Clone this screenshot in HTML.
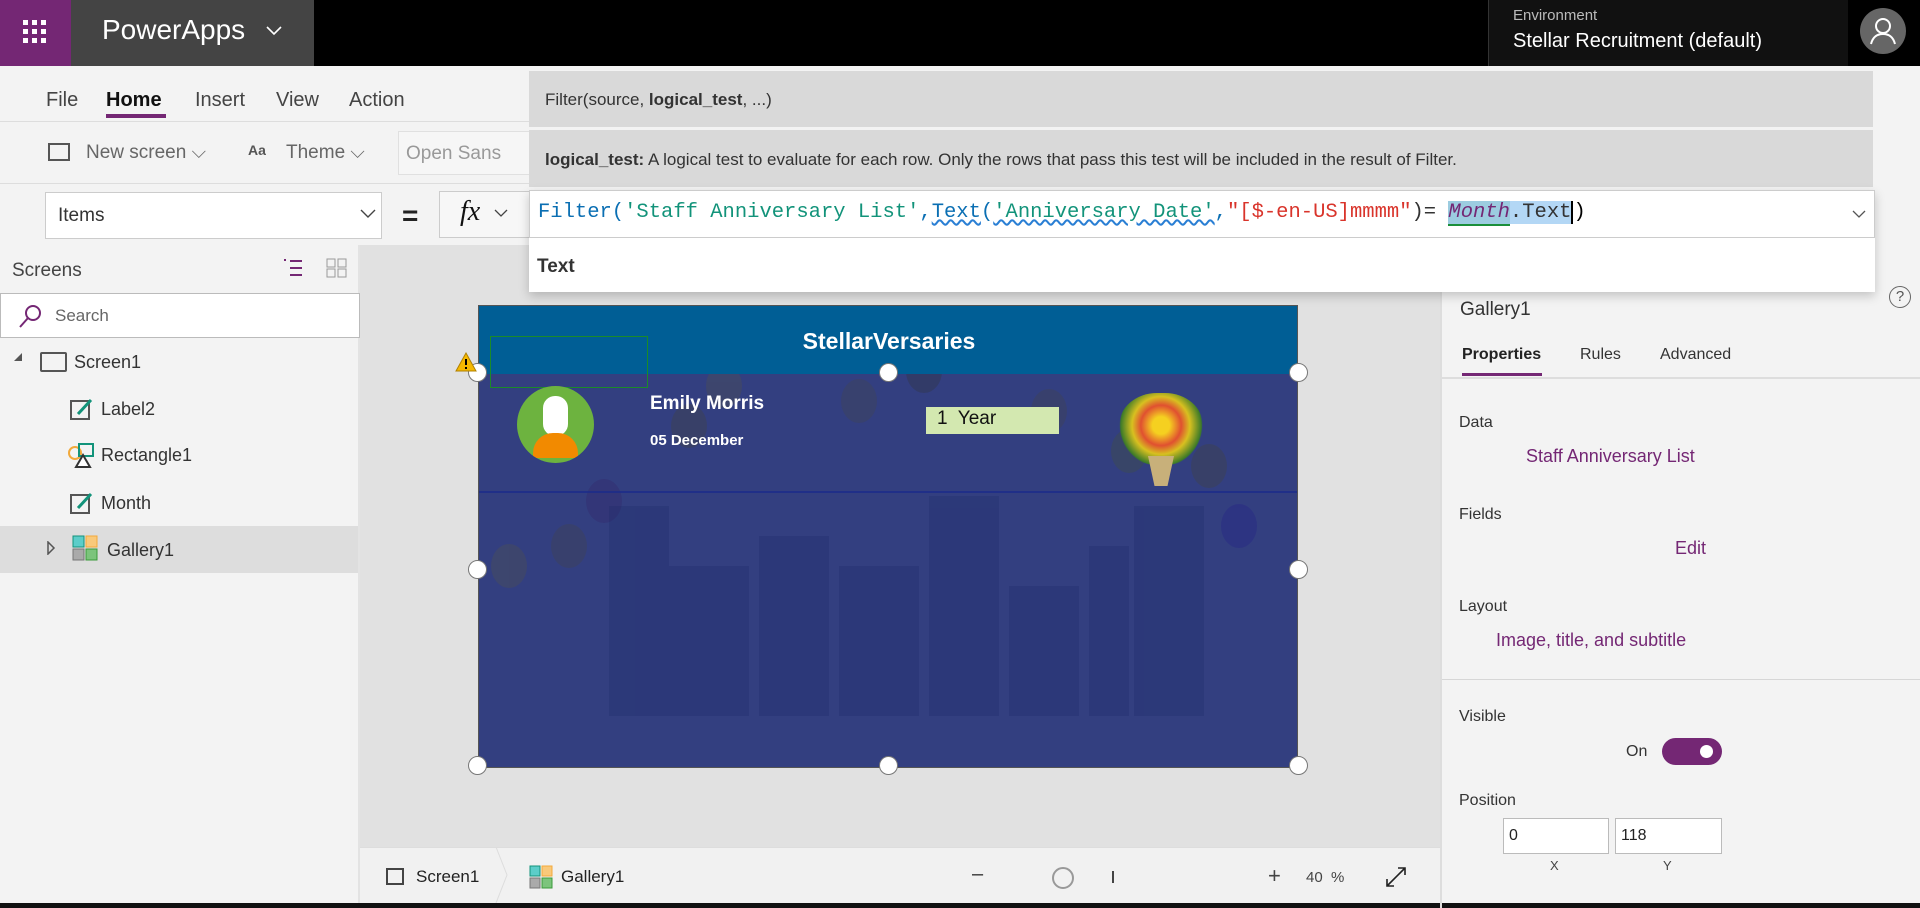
<!DOCTYPE html>
<html><head><meta charset="utf-8"><style>
*{box-sizing:border-box;margin:0;padding:0}
body{width:1920px;height:908px;overflow:hidden;background:#f3f3f3;font-family:"Liberation Sans",sans-serif;position:relative;color:#333}
.a{position:absolute;white-space:nowrap}
.mono{font-family:"Liberation Mono",monospace}
.z{z-index:10}
</style></head><body>
<div class="a" style="left:0;top:0;width:1920px;height:66px;background:#000"></div>
<div class="a" style="left:0;top:0;width:71px;height:66px;background:#742774"></div>
<svg class="a" style="left:23px;top:20px" width="24" height="24"><g fill="#fff"><rect x="0" y="0" width="5" height="5"/><rect x="9" y="0" width="5" height="5"/><rect x="18" y="0" width="5" height="5"/><rect x="0" y="9" width="5" height="5"/><rect x="9" y="9" width="5" height="5"/><rect x="18" y="9" width="5" height="5"/><rect x="0" y="18" width="5" height="5"/><rect x="9" y="18" width="5" height="5"/><rect x="18" y="18" width="5" height="5"/></g></svg>
<div class="a" style="left:71px;top:0;width:243px;height:66px;background:#444"></div>
<div class="a" style="left:102px;top:14px;font-size:28px;color:#fff">PowerApps</div>
<svg class="a" style="left:266px;top:26px" width="16" height="10"><path d="M1 1L8 8L15 1" stroke="#fff" stroke-width="1.6" fill="none"/></svg>
<div class="a" style="left:1488px;top:0;width:360px;height:66px;background:#111;border-left:1px solid #333"></div>
<div class="a" style="left:1513px;top:7px;font-size:15px;color:#bbb">Environment</div>
<div class="a" style="left:1513px;top:30px;font-size:20px;color:#fff">Stellar Recruitment (default)</div>
<div class="a" style="left:1860px;top:8px;width:46px;height:46px;border-radius:50%;background:#666"></div>
<svg class="a" style="left:1860px;top:8px" width="46" height="46"><circle cx="23" cy="18" r="7" stroke="#fff" stroke-width="2" fill="none"/><path d="M11 36c2-8 7-10 12-10s10 2 12 10" stroke="#fff" stroke-width="2" fill="none"/></svg>

<div class="a" style="left:0;top:121px;width:530px;height:1px;background:#ddd"></div>
<div class="a" style="left:46px;top:89px;font-size:20px;color:#444">File</div>
<div class="a" style="left:106px;top:89px;font-size:20px;color:#111;font-weight:bold">Home</div>
<div class="a" style="left:106px;top:114px;width:60px;height:4px;background:#742774"></div>
<div class="a" style="left:195px;top:89px;font-size:20px;color:#444">Insert</div>
<div class="a" style="left:276px;top:89px;font-size:20px;color:#444">View</div>
<div class="a" style="left:349px;top:89px;font-size:20px;color:#444">Action</div>
<div class="a" style="left:0;top:183px;width:530px;height:1px;background:#ddd"></div>
<div class="a" style="left:48px;top:143px;width:22px;height:18px;border:2px solid #555"></div>
<div class="a" style="left:86px;top:142px;font-size:19px;color:#666">New screen ⌵</div>
<div class="a" style="left:248px;top:142px;font-size:14px;color:#555;font-weight:bold">Aa</div>
<div class="a" style="left:286px;top:142px;font-size:19px;color:#666">Theme ⌵</div>
<div class="a" style="left:398px;top:131px;width:140px;height:44px;border:1px solid #e0e0e0;background:#f6f6f6"></div>
<div class="a" style="left:406px;top:143px;font-size:19px;color:#999">Open Sans</div>
<div class="a" style="left:45px;top:192px;width:337px;height:47px;background:#fff;border:1px solid #ccc"></div>
<div class="a" style="left:58px;top:205px;font-size:19px;color:#333">Items</div>
<svg class="a" style="left:360px;top:209px" width="16" height="10"><path d="M1 1L8 8L15 1" stroke="#444" stroke-width="1.4" fill="none"/></svg>
<div class="a" style="left:402px;top:200px;font-size:28px;color:#222;font-weight:bold">=</div>
<div class="a" style="left:439px;top:191px;width:95px;height:47px;background:#f7f7f7;border:1px solid #ccc"></div>
<div class="a" style="left:460px;top:196px;font-size:28px;color:#111;font-family:'Liberation Serif',serif;font-style:italic">fx</div>
<svg class="a" style="left:494px;top:209px" width="14" height="9"><path d="M1 1L7 7L13 1" stroke="#444" stroke-width="1.3" fill="none"/></svg>

<div class="a" style="left:358px;top:245px;width:2px;height:663px;background:#e3e3e3"></div>
<div class="a" style="left:12px;top:260px;font-size:19px;color:#444">Screens</div>
<svg class="a" style="left:280px;top:258px" width="26" height="20"><path d="M4 2h2M10 3h12M10 10h12M10 17h12" stroke="#742774" stroke-width="2"/></svg>
<svg class="a" style="left:326px;top:258px" width="22" height="20"><g stroke="#999" fill="none"><rect x="1" y="1" width="8" height="8"/><rect x="12" y="1" width="8" height="8"/><rect x="1" y="11" width="8" height="8"/><rect x="12" y="11" width="8" height="8"/></g></svg>
<div class="a" style="left:0;top:293px;width:360px;height:45px;background:#fff;border:1px solid #bbb"></div>
<svg class="a" style="left:18px;top:303px" width="26" height="26"><circle cx="15" cy="10" r="7" stroke="#742774" stroke-width="2" fill="none"/><path d="M10 15L2 24" stroke="#742774" stroke-width="2"/></svg>
<div class="a" style="left:55px;top:306px;font-size:17px;color:#666">Search</div>
<svg class="a" style="left:13px;top:352px" width="10" height="10"><path d="M9 1V9H1Z" fill="#555"/></svg>
<div class="a" style="left:40px;top:352px;width:27px;height:20px;border:2px solid #555;border-radius:2px"></div>
<div class="a" style="left:74px;top:352px;font-size:18px;color:#333">Screen1</div>
<svg class="a" style="left:69px;top:397px" width="26" height="24"><rect x="2" y="4" width="18" height="18" stroke="#555" stroke-width="2" fill="none"/><path d="M9 17L22 3" stroke="#12937a" stroke-width="3"/></svg>
<div class="a" style="left:101px;top:399px;font-size:18px;color:#333">Label2</div>
<svg class="a" style="left:66px;top:443px" width="30" height="26"><circle cx="9" cy="10" r="6" stroke="#f2a93b" stroke-width="2" fill="none"/><rect x="13" y="1" width="14" height="12" stroke="#12937a" stroke-width="2" fill="none"/><path d="M10 24L17 12L24 24Z" stroke="#333" stroke-width="2" fill="#fff"/></svg>
<div class="a" style="left:101px;top:445px;font-size:18px;color:#333">Rectangle1</div>
<svg class="a" style="left:69px;top:491px" width="26" height="24"><rect x="2" y="4" width="18" height="18" stroke="#555" stroke-width="2" fill="none"/><path d="M9 17L22 3" stroke="#12937a" stroke-width="3"/></svg>
<div class="a" style="left:101px;top:493px;font-size:18px;color:#333">Month</div>
<div class="a" style="left:0;top:526px;width:358px;height:47px;background:#ddd"></div>
<svg class="a" style="left:46px;top:541px" width="10" height="14"><path d="M2 1L8 7L2 13Z" fill="none" stroke="#555" stroke-width="1.5"/></svg>
<svg class="a" style="left:72px;top:535px" width="26" height="26"><rect x="1" y="1" width="11" height="11" fill="#5ccdc9" stroke="#12937a"/><rect x="14" y="1" width="11" height="11" fill="#f9c97a" stroke="#f2a93b"/><rect x="1" y="14" width="11" height="11" fill="#aaa" stroke="#777"/><rect x="14" y="14" width="11" height="11" fill="#7cc47c" stroke="#3a9a3a"/></svg>
<div class="a" style="left:107px;top:540px;font-size:18px;color:#333">Gallery1</div>

<div class="a" style="left:360px;top:245px;width:1080px;height:602px;background:#e1e1e1"></div>
<div class="a" style="left:478px;top:305px;width:820px;height:463px;background:#333f80;overflow:hidden;border:1px solid #555">
  <svg width="820" height="463" style="position:absolute;left:0;top:0">
    <g opacity=".3">
      <ellipse cx="70" cy="130" rx="18" ry="22" fill="#554"/><ellipse cx="125" cy="195" rx="18" ry="22" fill="#332266"/><ellipse cx="90" cy="240" rx="18" ry="22" fill="#444"/>
      <ellipse cx="210" cy="120" rx="18" ry="22" fill="#443"/><ellipse cx="245" cy="80" rx="18" ry="22" fill="#554"/><ellipse cx="380" cy="95" rx="18" ry="22" fill="#444"/>
      <ellipse cx="445" cy="65" rx="18" ry="22" fill="#333"/><ellipse cx="570" cy="105" rx="18" ry="22" fill="#444"/><ellipse cx="650" cy="145" rx="18" ry="22" fill="#453"/>
      <ellipse cx="760" cy="220" rx="18" ry="22" fill="#221a88"/><ellipse cx="730" cy="160" rx="18" ry="22" fill="#443"/><ellipse cx="30" cy="260" rx="18" ry="22" fill="#554"/>
    </g>
    <g fill="#1e2a6a" opacity=".3">
      <rect x="130" y="200" width="60" height="210"/><rect x="190" y="260" width="80" height="150"/><rect x="280" y="230" width="70" height="180"/>
      <rect x="360" y="260" width="80" height="150"/><rect x="450" y="190" width="70" height="220"/><rect x="530" y="280" width="70" height="130"/>
      <rect x="610" y="240" width="40" height="170"/><rect x="655" y="200" width="70" height="210"/>
    </g>
    <line x1="0" y1="186" x2="820" y2="186" stroke="#1a2a8a" stroke-width="1.5"/>
  </svg>
  <div class="a" style="left:0;top:0;width:820px;height:68px;background:#005e95"></div>
  <div class="a" style="left:0;top:22px;width:820px;text-align:center;font-size:23px;color:#fff;font-weight:bold">StellarVersaries</div>
  <div class="a" style="left:11px;top:30px;width:158px;height:52px;border:1px solid #1b8a2a"></div>
  <div class="a" style="left:38px;top:80px;width:77px;height:77px;border-radius:50%;background:#6db33f;overflow:hidden">
    <div class="a" style="left:26px;top:10px;width:25px;height:40px;border-radius:12px;background:#fff"></div>
    <div class="a" style="left:16px;top:47px;width:45px;height:25px;border-radius:20px 20px 0 0;background:#f28a00"></div>
  </div>
  <div class="a" style="left:171px;top:87px;font-size:19px;color:#fff;font-weight:bold">Emily Morris</div>
  <div class="a" style="left:171px;top:126px;font-size:15px;color:#fff;font-weight:bold">05 December</div>
  <div class="a" style="left:447px;top:101px;width:133px;height:27px;background:#d3e8b0"></div>
  <div class="a" style="left:458px;top:102px;font-size:19px;color:#111">1&nbsp; Year</div>
  <div class="a" style="left:640px;top:87px;width:84px;height:72px;border-radius:45%;background:radial-gradient(circle at 50% 45%,#f5d020 15%,#e05030 35%,#d8c020 50%,#3c7a28 70%,rgba(0,0,0,0) 72%)"></div>
  <div class="a" style="left:669px;top:150px;width:26px;height:30px;background:#c8b07a;clip-path:polygon(0 0,100% 0,75% 100%,25% 100%)"></div>
</div>
<div class="a" style="left:468px;top:363px;width:19px;height:19px;border-radius:50%;background:#fff;border:1px solid #777"></div>
<div class="a" style="left:879px;top:363px;width:19px;height:19px;border-radius:50%;background:#fff;border:1px solid #777"></div>
<div class="a" style="left:1289px;top:363px;width:19px;height:19px;border-radius:50%;background:#fff;border:1px solid #777"></div>
<div class="a" style="left:468px;top:560px;width:19px;height:19px;border-radius:50%;background:#fff;border:1px solid #777"></div>
<div class="a" style="left:1289px;top:560px;width:19px;height:19px;border-radius:50%;background:#fff;border:1px solid #777"></div>
<div class="a" style="left:468px;top:756px;width:19px;height:19px;border-radius:50%;background:#fff;border:1px solid #777"></div>
<div class="a" style="left:879px;top:756px;width:19px;height:19px;border-radius:50%;background:#fff;border:1px solid #777"></div>
<div class="a" style="left:1289px;top:756px;width:19px;height:19px;border-radius:50%;background:#fff;border:1px solid #777"></div>
<svg class="a" style="left:455px;top:352px" width="22" height="20"><path d="M11 1L21 19H1Z" fill="#f5b800" stroke="#b08000"/><path d="M11 7v6M11 15v2" stroke="#000" stroke-width="2"/></svg>

<div class="a" style="left:360px;top:847px;width:1080px;height:56px;background:#f1f1f1;border-top:1px solid #ddd"></div>
<div class="a" style="left:386px;top:868px;width:18px;height:17px;border:2px solid #444"></div>
<div class="a" style="left:416px;top:867px;font-size:17px;color:#222">Screen1</div>
<svg class="a" style="left:495px;top:847px" width="14" height="56"><path d="M1 0L12 28L1 56" stroke="#ddd" fill="none"/></svg>
<svg class="a" style="left:529px;top:865px" width="24" height="24"><rect x="1" y="1" width="10" height="10" fill="#5ccdc9" stroke="#12937a"/><rect x="13" y="1" width="10" height="10" fill="#f9c97a" stroke="#f2a93b"/><rect x="1" y="13" width="10" height="10" fill="#aaa" stroke="#777"/><rect x="13" y="13" width="10" height="10" fill="#7cc47c" stroke="#3a9a3a"/></svg>
<div class="a" style="left:561px;top:867px;font-size:17px;color:#222">Gallery1</div>
<div class="a" style="left:972px;top:863px;font-size:20px;color:#333">–</div>
<div class="a" style="left:1052px;top:867px;width:22px;height:22px;border-radius:50%;border:2px solid #999"></div>
<div class="a" style="left:1112px;top:871px;width:2px;height:12px;background:#444"></div>
<div class="a" style="left:1268px;top:863px;font-size:22px;color:#444">+</div>
<div class="a" style="left:1306px;top:869px;font-size:15px;color:#444">40 &nbsp;%</div>
<svg class="a" style="left:1385px;top:866px" width="22" height="22"><path d="M2 20L20 2M13 2h7v7M2 13v7h7" stroke="#222" stroke-width="1.6" fill="none"/></svg>
<div class="a" style="left:0;top:903px;width:1920px;height:5px;background:#111"></div>

<div class="a" style="left:1440px;top:245px;width:2px;height:663px;background:#ddd"></div>
<div class="a" style="left:1442px;top:245px;width:478px;height:658px;background:#f3f3f3"></div>
<div class="a" style="left:1889px;top:286px;width:22px;height:22px;border-radius:50%;border:1.5px solid #666;font-size:15px;text-align:center;line-height:19px;color:#555">?</div>
<div class="a" style="left:1460px;top:299px;font-size:19px;color:#333">Gallery1</div>
<div class="a" style="left:1462px;top:346px;font-size:16px;color:#222;font-weight:bold">Properties</div>
<div class="a" style="left:1462px;top:373px;width:80px;height:3px;background:#742774"></div>
<div class="a" style="left:1580px;top:346px;font-size:16px;color:#333">Rules</div>
<div class="a" style="left:1660px;top:346px;font-size:16px;color:#333">Advanced</div>
<div class="a" style="left:1442px;top:377px;width:478px;height:2px;background:#ddd"></div>
<div class="a" style="left:1459px;top:414px;font-size:16px;color:#333">Data</div>
<div class="a" style="left:1526px;top:446px;font-size:18px;color:#742774">Staff Anniversary List</div>
<div class="a" style="left:1459px;top:506px;font-size:16px;color:#333">Fields</div>
<div class="a" style="left:1675px;top:538px;font-size:18px;color:#742774">Edit</div>
<div class="a" style="left:1459px;top:598px;font-size:16px;color:#333">Layout</div>
<div class="a" style="left:1496px;top:630px;font-size:18px;color:#742774">Image, title, and subtitle</div>
<div class="a" style="left:1442px;top:679px;width:478px;height:1px;background:#d6d6d6"></div>
<div class="a" style="left:1459px;top:708px;font-size:16px;color:#333">Visible</div>
<div class="a" style="left:1626px;top:743px;font-size:16px;color:#333">On</div>
<div class="a" style="left:1662px;top:738px;width:60px;height:27px;border-radius:14px;background:#742774"></div>
<div class="a" style="left:1700px;top:745px;width:13px;height:13px;border-radius:50%;background:#fff"></div>
<div class="a" style="left:1459px;top:792px;font-size:16px;color:#333">Position</div>
<div class="a" style="left:1503px;top:818px;width:106px;height:36px;background:#fff;border:1px solid #bbb"></div>
<div class="a" style="left:1509px;top:827px;font-size:16px;color:#222">0</div>
<div class="a" style="left:1615px;top:818px;width:107px;height:36px;background:#fff;border:1px solid #bbb"></div>
<div class="a" style="left:1621px;top:827px;font-size:16px;color:#222">118</div>
<div class="a" style="left:1550px;top:858px;font-size:13px;color:#444">X</div>
<div class="a" style="left:1663px;top:858px;font-size:13px;color:#444">Y</div>

<div class="a z" style="left:529px;top:71px;width:1344px;height:56px;background:#d9d9d9"></div>
<div class="a z" style="left:545px;top:90px;font-size:17px;color:#333">Filter(source, <b>logical_test</b>, ...)</div>
<div class="a z" style="left:529px;top:130px;width:1344px;height:57px;background:#d9d9d9"></div>
<div class="a z" style="left:545px;top:150px;font-size:17px;color:#333"><b>logical_test:</b> A logical test to evaluate for each row. Only the rows that pass this test will be included in the result of Filter.</div>
<div class="a z" style="left:529px;top:190px;width:1346px;height:102px;background:#fff;box-shadow:0 4px 10px rgba(0,0,0,.2)"></div>
<div class="a z" style="left:529px;top:190px;width:1346px;height:48px;border:1px solid #ccc"></div>
<div class="a mono z" style="left:538px;top:201px;font-size:20.5px;color:#0b6fb3"><span>Filter(</span><span style="color:#12937a">'Staff Anniversary List'</span>,<span style="text-decoration:underline wavy #2a7fd4">Text</span>(<span style="color:#12937a;text-decoration:underline wavy #2a7fd4">'Anniversary Date'</span>,<span style="color:#d9342b">"[$-en-US]mmmm"</span><span style="color:#333">)= </span><span style="background:#9ccce0;color:#742774;font-style:italic;border-bottom:2px solid #1a8f3a">Month</span><span style="background:#b3d7f5;color:#333">.Text</span><span style="color:#000;border-left:2px solid #000">)</span></div>
<svg class="a z" style="left:1852px;top:210px" width="14" height="9"><path d="M1 1L7 7L13 1" stroke="#555" stroke-width="1.3" fill="none"/></svg>
<div class="a z" style="left:537px;top:256px;font-size:19px;color:#333;font-weight:bold">Text</div>
</body></html>
